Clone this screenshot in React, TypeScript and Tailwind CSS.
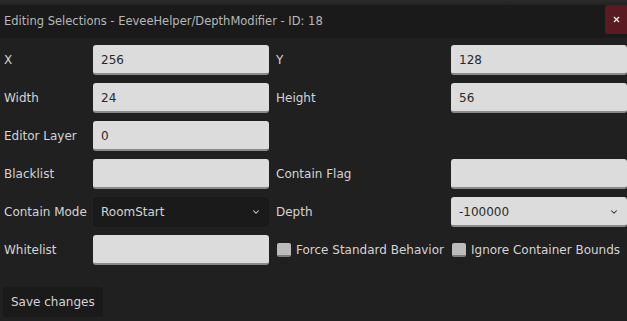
import { ChevronDown, X } from "lucide-react";

function TextBox({ value }: { value?: string }) {
  return (
    <div className="flex h-[30px] w-[176px] shrink-0 items-center rounded-[3px] border-b-2 border-[#8a8a8a] bg-[#dcdcdc] px-2 pt-[2px] text-[#2a2a2a]">
      {value}
    </div>
  );
}

function Label({ text, w }: { text: string; w: string }) {
  return <div className={`${w} shrink-0 text-[#d4d4d4]`}>{text}</div>;
}

function Check({ text }: { text: string }) {
  return (
    <div className="flex w-[175px] shrink-0 items-center gap-[5px] text-[#d4d4d4]">
      <span className="h-[14px] w-[14px] shrink-0 rounded-[2px] border-b-2 border-[#7c7c7c] bg-[#bcbcbc]" />
      <span className="whitespace-nowrap">{text}</span>
    </div>
  );
}

export default function App() {
  return (
    <div
      className="flex h-[321px] w-[627px] flex-col overflow-hidden bg-[#202020] text-[12px]"
      style={{ fontFamily: '"DejaVu Sans", sans-serif' }}
    >
      <div className="h-[5px] bg-gradient-to-b from-[#2c2c2c] to-[#222222]" />
      <div className="flex h-[33px] items-center justify-between bg-[#1a1a1a] pl-1">
        <span className="whitespace-nowrap text-[11.5px] text-[#b8b8b8]">
          Editing Selections - EeveeHelper/DepthModifier - ID: 18
        </span>
        <button
          type="button"
          className="flex h-[29px] w-[22px] items-center justify-center self-start rounded-l-[3px] bg-[#5a1a22] text-white"
        >
          <X size={9} strokeWidth={3} />
        </button>
      </div>

      <div className="flex flex-col gap-2 pl-1 pt-[7px]">
        <div className="flex items-center">
          <Label text="X" w="w-[89px]" />
          <TextBox value="256" />
          <div className="w-2" />
          <Label text="Y" w="w-[175px]" />
          <TextBox value="128" />
        </div>
        <div className="flex items-center">
          <Label text="Width" w="w-[89px]" />
          <TextBox value="24" />
          <div className="w-2" />
          <Label text="Height" w="w-[175px]" />
          <TextBox value="56" />
        </div>
        <div className="flex items-center">
          <Label text="Editor Layer" w="w-[89px]" />
          <TextBox value="0" />
        </div>
        <div className="flex items-center">
          <Label text="Blacklist" w="w-[89px]" />
          <TextBox />
          <div className="w-2" />
          <Label text="Contain Flag" w="w-[175px]" />
          <TextBox />
        </div>
        <div className="flex items-center">
          <Label text="Contain Mode" w="w-[89px]" />
          <div className="flex h-[30px] w-[176px] shrink-0 items-center justify-between rounded-[3px] bg-[#1a1a1a] px-2 text-[#d4d4d4]">
            <span>RoomStart</span>
            <ChevronDown size={10} strokeWidth={2.5} />
          </div>
          <div className="w-2" />
          <Label text="Depth" w="w-[175px]" />
          <div className="flex h-[30px] w-[176px] shrink-0 items-center justify-between rounded-[3px] border-b-2 border-[#8a8a8a] bg-[#dcdcdc] px-2 pt-[2px] text-[#2a2a2a]">
            <span>-100000</span>
            <ChevronDown size={10} strokeWidth={2.5} />
          </div>
        </div>
        <div className="flex items-center">
          <Label text="Whitelist" w="w-[89px]" />
          <TextBox />
          <div className="w-2" />
          <Check text="Force Standard Behavior" />
          <Check text="Ignore Container Bounds" />
        </div>
      </div>

      <div className="pl-[3px] pt-[22px]">
        <button
          type="button"
          className="h-[30px] rounded-[3px] bg-[#1a1a1a] px-2 text-[#d4d4d4]"
        >
          Save changes
        </button>
      </div>
    </div>
  );
}
